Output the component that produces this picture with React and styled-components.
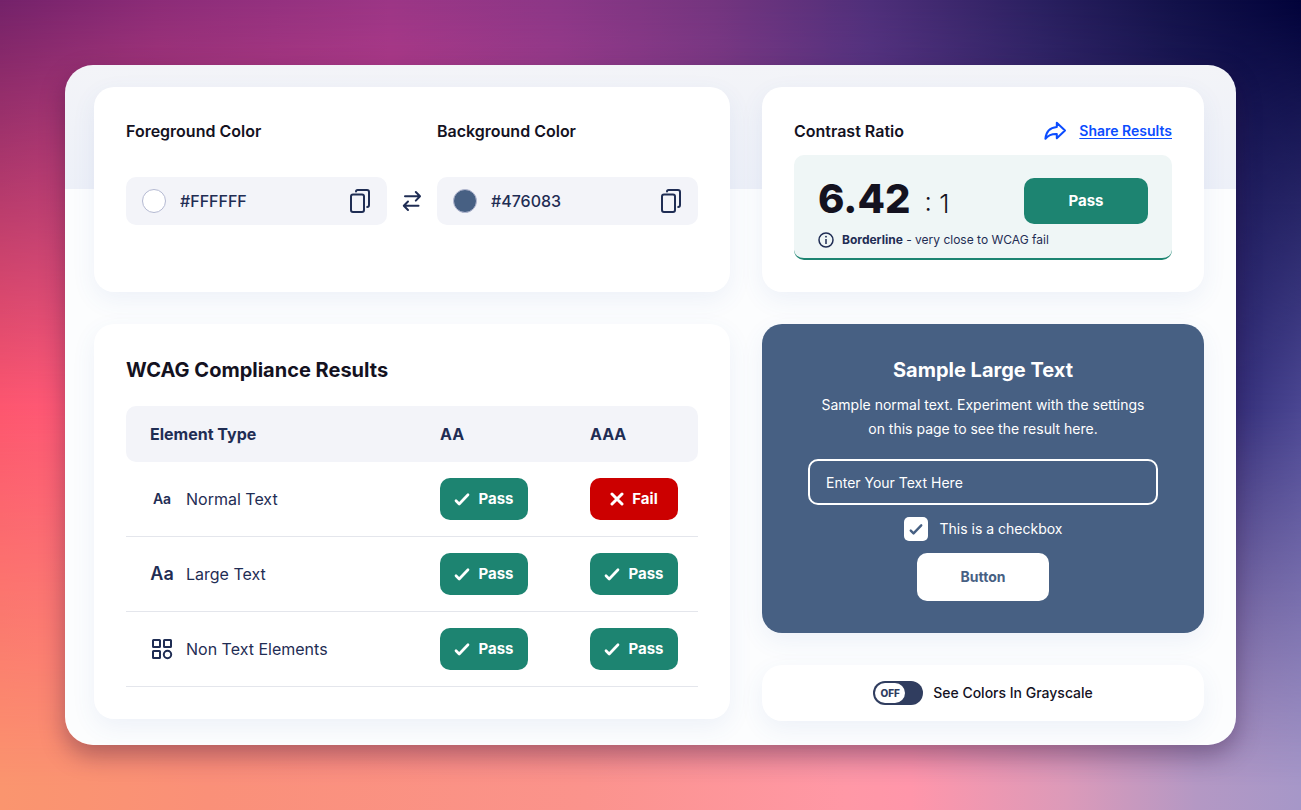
import React, { useState } from "react";
import styled, { createGlobalStyle, css } from "styled-components";

const ink = "#14121f";
const navy = "#1f2d54";
const green = "#1d8471";
const red = "#cc0000";
const slate = "#476083";
const pale = "#f3f4f9";

const GlobalStyle = createGlobalStyle`
  *, *::before, *::after { box-sizing: border-box; }
  body {
    margin: 0;
    font-family: Metropolis, Inter, "Liberation Sans", sans-serif;
    font-size: 16px;
    line-height: 24px;
    color: ${navy};
  }
  h1, h2, p { margin: 0; }
  button, input { font: inherit; color: inherit; }
`;

/* Three horizontal colour bands (top, middle, bottom) faded into each other. */
const Backdrop = styled.div`
  position: relative;
  isolation: isolate;
  min-height: 100vh;
  padding: 65px;
  background: linear-gradient(90deg, #74226a 0%, #8c2c78 12%, #9c3686 30%, #8c3787 43%, #74357f 55%, #4f2f7a 67%, #2a2060 80%, #13124a 90%, #02033a 100%);

  &::before, &::after {
    content: "";
    position: absolute;
    inset: 0;
    z-index: -1;
  }
  &::before {
    background: linear-gradient(90deg, #fd566f 0%, #ff5a78 6%, #f04890 30%, #b04a9c 50%, #7a48a0 65%, #35307c 95%, #4a4692 100%);
    mask-image: linear-gradient(180deg, transparent 0%, #000 50%);
  }
  &::after {
    background: linear-gradient(90deg, #fa956e 0%, #fa9078 16%, #fb938c 45%, #ff98a6 65%, #ff96aa 70%, #dc9ab9 82%, #b498c4 92%, #a697c8 100%);
    mask-image: linear-gradient(180deg, transparent 50%, #000 97%);
  }
`;

const Panel = styled.main`
  display: grid;
  grid-template-columns: minmax(0, 636fr) minmax(0, 442fr);
  column-gap: 32px;
  min-height: calc(100vh - 130px);
  padding: 22px 32px 24px 29px;
  border-radius: 28px;
  background: linear-gradient(180deg, #f3f4f8 0, #edf0f8 124px, #fcfdfe 124px);
  box-shadow: 0 10px 24px rgba(40, 10, 50, 0.36);
`;

const Column = styled.div`
  display: flex;
  flex-direction: column;
  gap: 32px;
`;

const Card = styled.section`
  padding: 32px;
  border-radius: 20px;
  background: #fff;
  box-shadow: 0 8px 24px rgba(70, 100, 180, 0.08);
`;

const ColorCard = styled(Card)`
  display: grid;
  grid-template-columns: minmax(0, 1fr) 50px minmax(0, 1fr);
  grid-template-rows: 24px 48px;
  row-gap: 34px;
  min-height: 205px;
  align-content: start;
`;

const ColorLabel = styled.label`
  font-weight: 600;
  color: ${ink};
  &:nth-of-type(2) { grid-column: 3; }
`;

const ColorField = styled.div`
  display: flex;
  align-items: center;
  gap: 14px;
  padding: 0 17px 0 16px;
  border-radius: 10px;
  background: ${pale};
`;

const Swatch = styled.span`
  flex: none;
  width: 24px;
  height: 24px;
  border: 1px solid #b4b9d2;
  border-radius: 50%;
  background: ${(p) => p.$color};
`;

const HexInput = styled.input`
  flex: 1;
  min-width: 0;
  padding: 0;
  border: 0;
  outline: 0;
  background: none;
  font-weight: 500;
`;

const IconButton = styled.button`
  display: flex;
  align-items: center;
  justify-content: center;
  padding: 0;
  border: 0;
  background: none;
  color: ${navy};
  cursor: pointer;
`;

const ResultsCard = styled(Card)`
  min-height: 395px;
`;

const Title = styled.h1`
  font-size: 20px;
  line-height: 28px;
  font-weight: 700;
  color: ${ink};
`;

const Table = styled.table`
  width: 100%;
  margin-top: 22px;
  border-collapse: separate;
  border-spacing: 0;
  table-layout: fixed;
`;

const HeadCell = styled.th`
  height: 56px;
  padding: 0;
  background: ${pale};
  font-weight: 700;
  text-align: left;
  width: ${(p) => p.$width || "auto"};
  &:first-child { padding-left: 24px; border-radius: 10px 0 0 10px; }
  &:last-child { border-radius: 0 10px 10px 0; }
`;

const Cell = styled.td`
  height: 75px;
  padding: 0;
  border-bottom: 1px solid #e4e6ec;
  &:first-child { padding-left: 24px; }
`;

const Kind = styled.div`
  display: flex;
  align-items: center;
  gap: 12px;
`;

const KindIcon = styled.span`
  display: flex;
  justify-content: center;
  width: 24px;
  font-size: ${(p) => p.$size}px;
  font-weight: 600;
`;

const Badge = styled.span`
  display: flex;
  align-items: center;
  justify-content: center;
  gap: 8px;
  width: 88px;
  height: 42px;
  border-radius: 10px;
  background: ${(p) => (p.$pass ? green : red)};
  color: #fff;
  font-size: 15px;
  font-weight: 700;
`;

const RatioCard = styled(Card)`
  min-height: 205px;
`;

const RatioHead = styled.div`
  display: flex;
  align-items: center;
  justify-content: space-between;
`;

const Heading = styled.h2`
  font-size: 16px;
  line-height: 24px;
  font-weight: 600;
  color: ${ink};
`;

const ShareLink = styled.a`
  display: flex;
  align-items: center;
  gap: 12px;
  color: #0b4cff;
  font-size: 14px;
  font-weight: 600;
  text-decoration: none;
  span { text-decoration: underline; text-decoration-thickness: 1px; text-underline-offset: 2px; }
`;

const ScoreBox = styled.div`
  margin-top: 12px;
  height: 105px;
  padding: 20px 24px 0;
  border-radius: 10px;
  border-bottom: 2px solid ${green};
  background: #eff6f6;
`;

const ScoreRow = styled.div`
  display: flex;
  align-items: center;
  justify-content: space-between;
  height: 52px;
`;

const Score = styled.div`
  display: flex;
  align-items: baseline;
  gap: 14px;
  font-size: 26px;
  line-height: 48px;
  color: ${ink};
  font-weight: 300;
  strong { font-size: 40px; font-weight: 800; }
`;

const Verdict = styled.span`
  width: 124px;
  height: 46px;
  border-radius: 10px;
  background: ${green};
  color: #fff;
  font-size: 15px;
  font-weight: 700;
  line-height: 46px;
  text-align: center;
`;

const Note = styled.p`
  display: flex;
  align-items: center;
  gap: 8px;
  height: 26px;
  font-size: 12px;
  line-height: 26px;
`;

const Sample = styled(Card)`
  display: flex;
  flex-direction: column;
  align-items: center;
  min-height: 309px;
  background: ${slate};
  color: #fff;
  text-align: center;
  font-size: 14px;
  ${Title} { color: #fff; }
`;

const SampleText = styled.p`
  max-width: 340px;
  margin-top: 9px;
`;

const SampleInput = styled.input`
  width: 100%;
  max-width: 350px;
  height: 46px;
  margin-top: 18px;
  padding: 0 16px;
  border: 2px solid #fff;
  border-radius: 10px;
  background: transparent;
  outline: 0;
  &::placeholder { color: #fff; opacity: 1; }
`;

const CheckLabel = styled.label`
  display: flex;
  align-items: center;
  gap: 12px;
  margin-top: 12px;
`;

const CheckSlot = styled.span`
  display: grid;
  place-items: center;
  color: ${slate};
  > * { grid-area: 1 / 1; }
  svg { pointer-events: none; }
`;

const Checkbox = styled.input`
  appearance: none;
  width: 24px;
  height: 24px;
  margin: 0;
  border-radius: 5px;
  background: #fff;
  &:not(:checked) + svg { display: none; }
`;

const SampleButton = styled.button`
  width: 132px;
  height: 48px;
  margin-top: 12px;
  padding: 0;
  border: 0;
  border-radius: 10px;
  background: #fff;
  color: ${slate};
  font-weight: 700;
`;

const GrayCard = styled(Card)`
  display: flex;
  align-items: center;
  justify-content: center;
  height: 56px;
  padding: 0;
`;

const ToggleLabel = styled.label`
  display: flex;
  align-items: center;
  gap: 10px;
  color: ${ink};
  font-size: 14px;
  font-weight: 500;
`;

const HiddenCheck = styled.input`
  appearance: none;
  width: 0;
  height: 0;
  margin: 0 -10px 0 0;
`;

const Track = styled.span`
  display: flex;
  width: 50px;
  height: 24px;
  padding: 2px;
  border-radius: 12px;
  background: #303d5f;
  ${(p) => p.$on && css`justify-content: flex-end;`}
`;

const Knob = styled.span`
  width: 30px;
  border-radius: 10px;
  background: #fff;
  color: #303d5f;
  font-size: 10px;
  font-weight: 800;
  line-height: 20px;
  text-align: center;
`;

const CopyIcon = () => (
  <svg width="20" height="24" viewBox="0 0 20 24" fill="none" stroke="currentColor" strokeWidth="2" strokeLinejoin="round" strokeLinecap="round">
    <rect x="1" y="5.5" width="13" height="17.5" rx="2" />
    <path d="M6 2.6 Q6 1 7.6 1 H17 Q19 1 19 3 V16 Q19 18 17.2 18" />
  </svg>
);

const SwapIcon = () => (
  <svg width="20" height="22" viewBox="0 0 20 22" fill="none" stroke="currentColor" strokeWidth="2" strokeLinejoin="round" strokeLinecap="round">
    <path d="M3 6.3 H17.8 M13.8 2 L18 6.3 L13.8 10.6 M16.5 15.8 H2 M6 11.5 L1.8 15.8 L6 20" />
  </svg>
);

const ShareIcon = () => (
  <svg width="23" height="20" viewBox="0 0 23 20" fill="none" stroke="currentColor" strokeWidth="2" strokeLinejoin="round">
    <path d="M12.8 1.8 L21 9.5 L12.8 17.2 V13 C8 12.8 4.5 14 1.4 17.8 C2 10.5 6.5 6.5 12.8 6 Z" />
  </svg>
);

const InfoIcon = () => (
  <svg width="16" height="16" viewBox="0 0 16 16" fill="none" stroke="currentColor" strokeWidth="1.5">
    <circle cx="8" cy="8" r="7" />
    <path d="M8 7 V12" />
    <circle cx="8" cy="4.7" r="0.9" fill="currentColor" stroke="none" />
  </svg>
);

const GridIcon = () => (
  <svg width="22" height="22" viewBox="0 0 22 22" fill="none" stroke="currentColor" strokeWidth="2">
    <rect x="2" y="2" width="7" height="7" rx="0.5" />
    <rect x="13" y="2" width="7" height="7" rx="0.5" />
    <rect x="2" y="13" width="7" height="7" rx="0.5" />
    <circle cx="16.5" cy="16.5" r="3.7" />
  </svg>
);

const CheckIcon = ({ size = 16 }) => (
  <svg width={size} height={size} viewBox="0 0 16 16" fill="none" stroke="currentColor" strokeWidth="2.7" strokeLinecap="round" strokeLinejoin="round">
    <path d="M2 9.8 L5.2 13 L14 3.8" />
  </svg>
);

const CrossIcon = () => (
  <svg width="14" height="14" viewBox="0 0 14 14" fill="none" stroke="currentColor" strokeWidth="3" strokeLinecap="round">
    <path d="M2 2 L12 12 M12 2 L2 12" />
  </svg>
);

const Result = ({ pass }) => (
  <Badge $pass={pass}>
    {pass ? <CheckIcon /> : <CrossIcon />}
    {pass ? "Pass" : "Fail"}
  </Badge>
);

const rows = [
  { name: "Normal Text", icon: "Aa", size: 14, aa: true, aaa: false },
  { name: "Large Text", icon: "Aa", size: 18, aa: true, aaa: true },
  { name: "Non Text Elements", icon: <GridIcon />, size: 16, aa: true, aaa: true },
];

export default function App() {
  const [fg, setFg] = useState("#FFFFFF");
  const [bg, setBg] = useState("#476083");
  const [gray, setGray] = useState(false);
  const swap = () => {
    setFg(bg);
    setBg(fg);
  };

  return (
    <>
      <GlobalStyle />
      <Backdrop>
        <Panel>
          <Column>
            <ColorCard>
              <ColorLabel htmlFor="foreground">Foreground Color</ColorLabel>
              <ColorLabel htmlFor="background">Background Color</ColorLabel>
              <ColorField>
                <Swatch $color={fg} />
                <HexInput id="foreground" value={fg} onChange={(e) => setFg(e.target.value)} />
                <IconButton aria-label="Copy foreground color"><CopyIcon /></IconButton>
              </ColorField>
              <IconButton aria-label="Swap colors" onClick={swap}><SwapIcon /></IconButton>
              <ColorField>
                <Swatch $color={bg} />
                <HexInput id="background" value={bg} onChange={(e) => setBg(e.target.value)} />
                <IconButton aria-label="Copy background color"><CopyIcon /></IconButton>
              </ColorField>
            </ColorCard>

            <ResultsCard>
              <Title>WCAG Compliance Results</Title>
              <Table>
                <thead>
                  <tr>
                    <HeadCell scope="col">Element Type</HeadCell>
                    <HeadCell scope="col" $width="150px">AA</HeadCell>
                    <HeadCell scope="col" $width="108px">AAA</HeadCell>
                  </tr>
                </thead>
                <tbody>
                  {rows.map((row) => (
                    <tr key={row.name}>
                      <Cell>
                        <Kind>
                          <KindIcon $size={row.size}>{row.icon}</KindIcon>
                          {row.name}
                        </Kind>
                      </Cell>
                      <Cell><Result pass={row.aa} /></Cell>
                      <Cell><Result pass={row.aaa} /></Cell>
                    </tr>
                  ))}
                </tbody>
              </Table>
            </ResultsCard>
          </Column>

          <Column>
            <RatioCard>
              <RatioHead>
                <Heading>Contrast Ratio</Heading>
                <ShareLink href="#share"><ShareIcon /><span>Share Results</span></ShareLink>
              </RatioHead>
              <ScoreBox>
                <ScoreRow>
                  <Score><strong>6.42</strong><span>: 1</span></Score>
                  <Verdict>Pass</Verdict>
                </ScoreRow>
                <Note>
                  <InfoIcon />
                  <span><b>Borderline</b> - very close to WCAG fail</span>
                </Note>
              </ScoreBox>
            </RatioCard>

            <Sample>
              <Title as="h2">Sample Large Text</Title>
              <SampleText>Sample normal text. Experiment with the settings on this page to see the result here.</SampleText>
              <SampleInput aria-label="Sample text" placeholder="Enter Your Text Here" />
              <CheckLabel>
                <CheckSlot>
                  <Checkbox type="checkbox" defaultChecked />
                  <CheckIcon size={14} />
                </CheckSlot>
                This is a checkbox
              </CheckLabel>
              <SampleButton>Button</SampleButton>
            </Sample>

            <GrayCard>
              <ToggleLabel>
                <HiddenCheck type="checkbox" role="switch" checked={gray} onChange={(e) => setGray(e.target.checked)} />
                <Track $on={gray}><Knob>{gray ? "ON" : "OFF"}</Knob></Track>
                See Colors In Grayscale
              </ToggleLabel>
            </GrayCard>
          </Column>
        </Panel>
      </Backdrop>
    </>
  );
}
